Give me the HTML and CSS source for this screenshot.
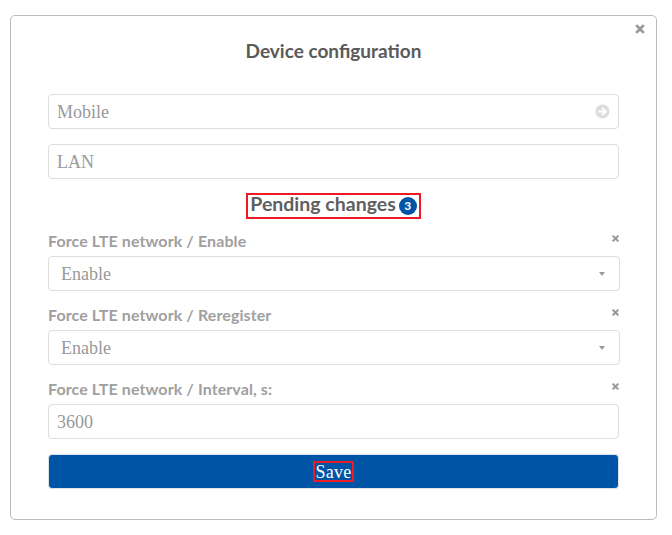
FILE: index.html
```html
<!DOCTYPE html>
<html>
<head>
  <title>Device configuration</title>
  <meta charset="UTF-8" name="viewport" content="width=device-width, initial-scale=1">
  <link rel="stylesheet" href="styles.css">
</head>
<body>
  <div class="modal">
    <svg class="close close-modal" viewBox="0 0 10 10"><path d="M2.600 1 5 3.400 7.400 1 9 2.600 6.600 5 9 7.400 7.400 9 5 6.600 2.600 9 1 7.400 3.400 5 1 2.600z"/></svg>
    <h2 class="title">Device configuration</h2>

    <div class="field field-link">
      <span>Mobile</span>
      <svg class="go" viewBox="0 0 16 16"><path fill-rule="evenodd" d="M8 .5a7.500 7.500 0 1 0 0 15 7.500 7.500 0 0 0 0-15zM8.300 3.400l4.600 4.600-4.600 4.600-1.500-1.500 2-2H3.500V7h5.300l-2-2z"/></svg>
    </div>
    <div class="field">LAN</div>

    <div class="pending-row">
      <h3 class="pending"><span class="pending-text">Pending changes</span> <span class="badge">3</span></h3>
    </div>

    <div class="label-row">
      <label>Force LTE network / Enable</label>
      <svg class="close" viewBox="0 0 10 10"><path d="M2.600 1 5 3.400 7.400 1 9 2.600 6.600 5 9 7.400 7.400 9 5 6.600 2.600 9 1 7.400 3.400 5 1 2.600z"/></svg>
    </div>
    <div class="field field-select">
      <span>Enable</span>
      <i class="caret"></i>
    </div>

    <div class="label-row">
      <label>Force LTE network / Reregister</label>
      <svg class="close" viewBox="0 0 10 10"><path d="M2.600 1 5 3.400 7.400 1 9 2.600 6.600 5 9 7.400 7.400 9 5 6.600 2.600 9 1 7.400 3.400 5 1 2.600z"/></svg>
    </div>
    <div class="field field-select">
      <span>Enable</span>
      <i class="caret"></i>
    </div>

    <div class="label-row">
      <label>Force LTE network / Interval, s:</label>
      <svg class="close" viewBox="0 0 10 10"><path d="M2.600 1 5 3.400 7.400 1 9 2.600 6.600 5 9 7.400 7.400 9 5 6.600 2.600 9 1 7.400 3.400 5 1 2.600z"/></svg>
    </div>
    <div class="field">3600</div>

    <button class="save"><span class="save-text">Save</span></button>
  </div>
</body>
</html>
```
FILE: styles.css
```css
html {
  background-color: #ffffff;
}
body {
  margin: 0;
  font-family: 'Lato', sans-serif;
}
.modal {
  position: relative;
  box-sizing: border-box;
  width: 647px;
  height: 505px;
  margin: 15px 0 0 10px;
  padding: 25px 37px 0;
  background-color: #fff;
  border: 1px solid #bbbbbb;
  border-radius: 5px;
}
.title {
  margin: 0 0 34px;
  height: 19px;
  line-height: 19px;
  font-size: 19px;
  font-weight: 700;
  color: #5a5a5a;
  text-align: center;
}
.field {
  box-sizing: border-box;
  display: flex;
  align-items: center;
  justify-content: space-between;
  width: 571px;
  height: 35px;
  margin-bottom: 15px;
  padding: 2px 8px 0;
  font-family: 'Liberation Serif', serif;
  font-size: 18px;
  color: #999999;
  border: 1px solid #dddddd;
  border-radius: 4px;
}
.field-select {
  width: 572px;
  margin-bottom: 0;
  padding: 2px 14px 0 12px;
}
.field-link .go {
  width: 15px;
  height: 15px;
  margin-top: -2px;
  fill: #dddddd;
}
.caret {
  width: 0;
  height: 0;
  margin-top: -1px;
  border-left: 3px solid transparent;
  border-right: 3px solid transparent;
  border-top: 4px solid #999999;
}
.pending-row {
  display: flex;
  justify-content: center;
  margin-top: -1px;
}
.pending {
  display: flex;
  align-items: center;
  box-sizing: border-box;
  height: 26px;
  margin: 0;
  padding: 0 2px;
  gap: 3px;
  font-size: 19.500px;
  font-weight: 700;
  color: #5f5f5f;
  border: 2px solid #ed1c24;
}
.pending-text {
  margin-top: -5px;
}
.badge {
  display: inline-block;
  width: 18px;
  height: 18px;
  line-height: 18px;
  text-align: center;
  font-size: 12px;
  color: #fff;
  background-color: #0054a6;
  border-radius: 50%;
}
.label-row {
  display: flex;
  justify-content: space-between;
  width: 571px;
  height: 19px;
  margin-top: 13px;
  margin-bottom: 5px;
}
.label-row + .field + .label-row {
  margin-top: 15px;
}
label {
  margin-top: -1px;
  font-size: 16px;
  line-height: 19px;
  letter-spacing: .1px;
  font-weight: 700;
  color: #a0a0a0;
}
.close {
  width: 9px;
  height: 9px;
  margin-top: 2px;
  margin-right: -1px;
  fill: #999999;
}
.close-modal {
  position: absolute;
  top: 7px;
  right: 10px;
  width: 12px;
  height: 12px;
  margin: 0;
}
.save {
  display: flex;
  align-items: center;
  justify-content: center;
  width: 571px;
  height: 35px;
  padding: 0;
  background-color: #0054a6;
  border: 1px solid #dde3ea;
  border-radius: 4px;
}
.save-text {
  box-sizing: border-box;
  height: 21px;
  padding: 0 1px;
  line-height: 18px;
  letter-spacing: .2px;
  font-family: 'Liberation Serif', serif;
  font-size: 18px;
  color: #fff;
  border: 2px solid #ed1c24;
}
```
